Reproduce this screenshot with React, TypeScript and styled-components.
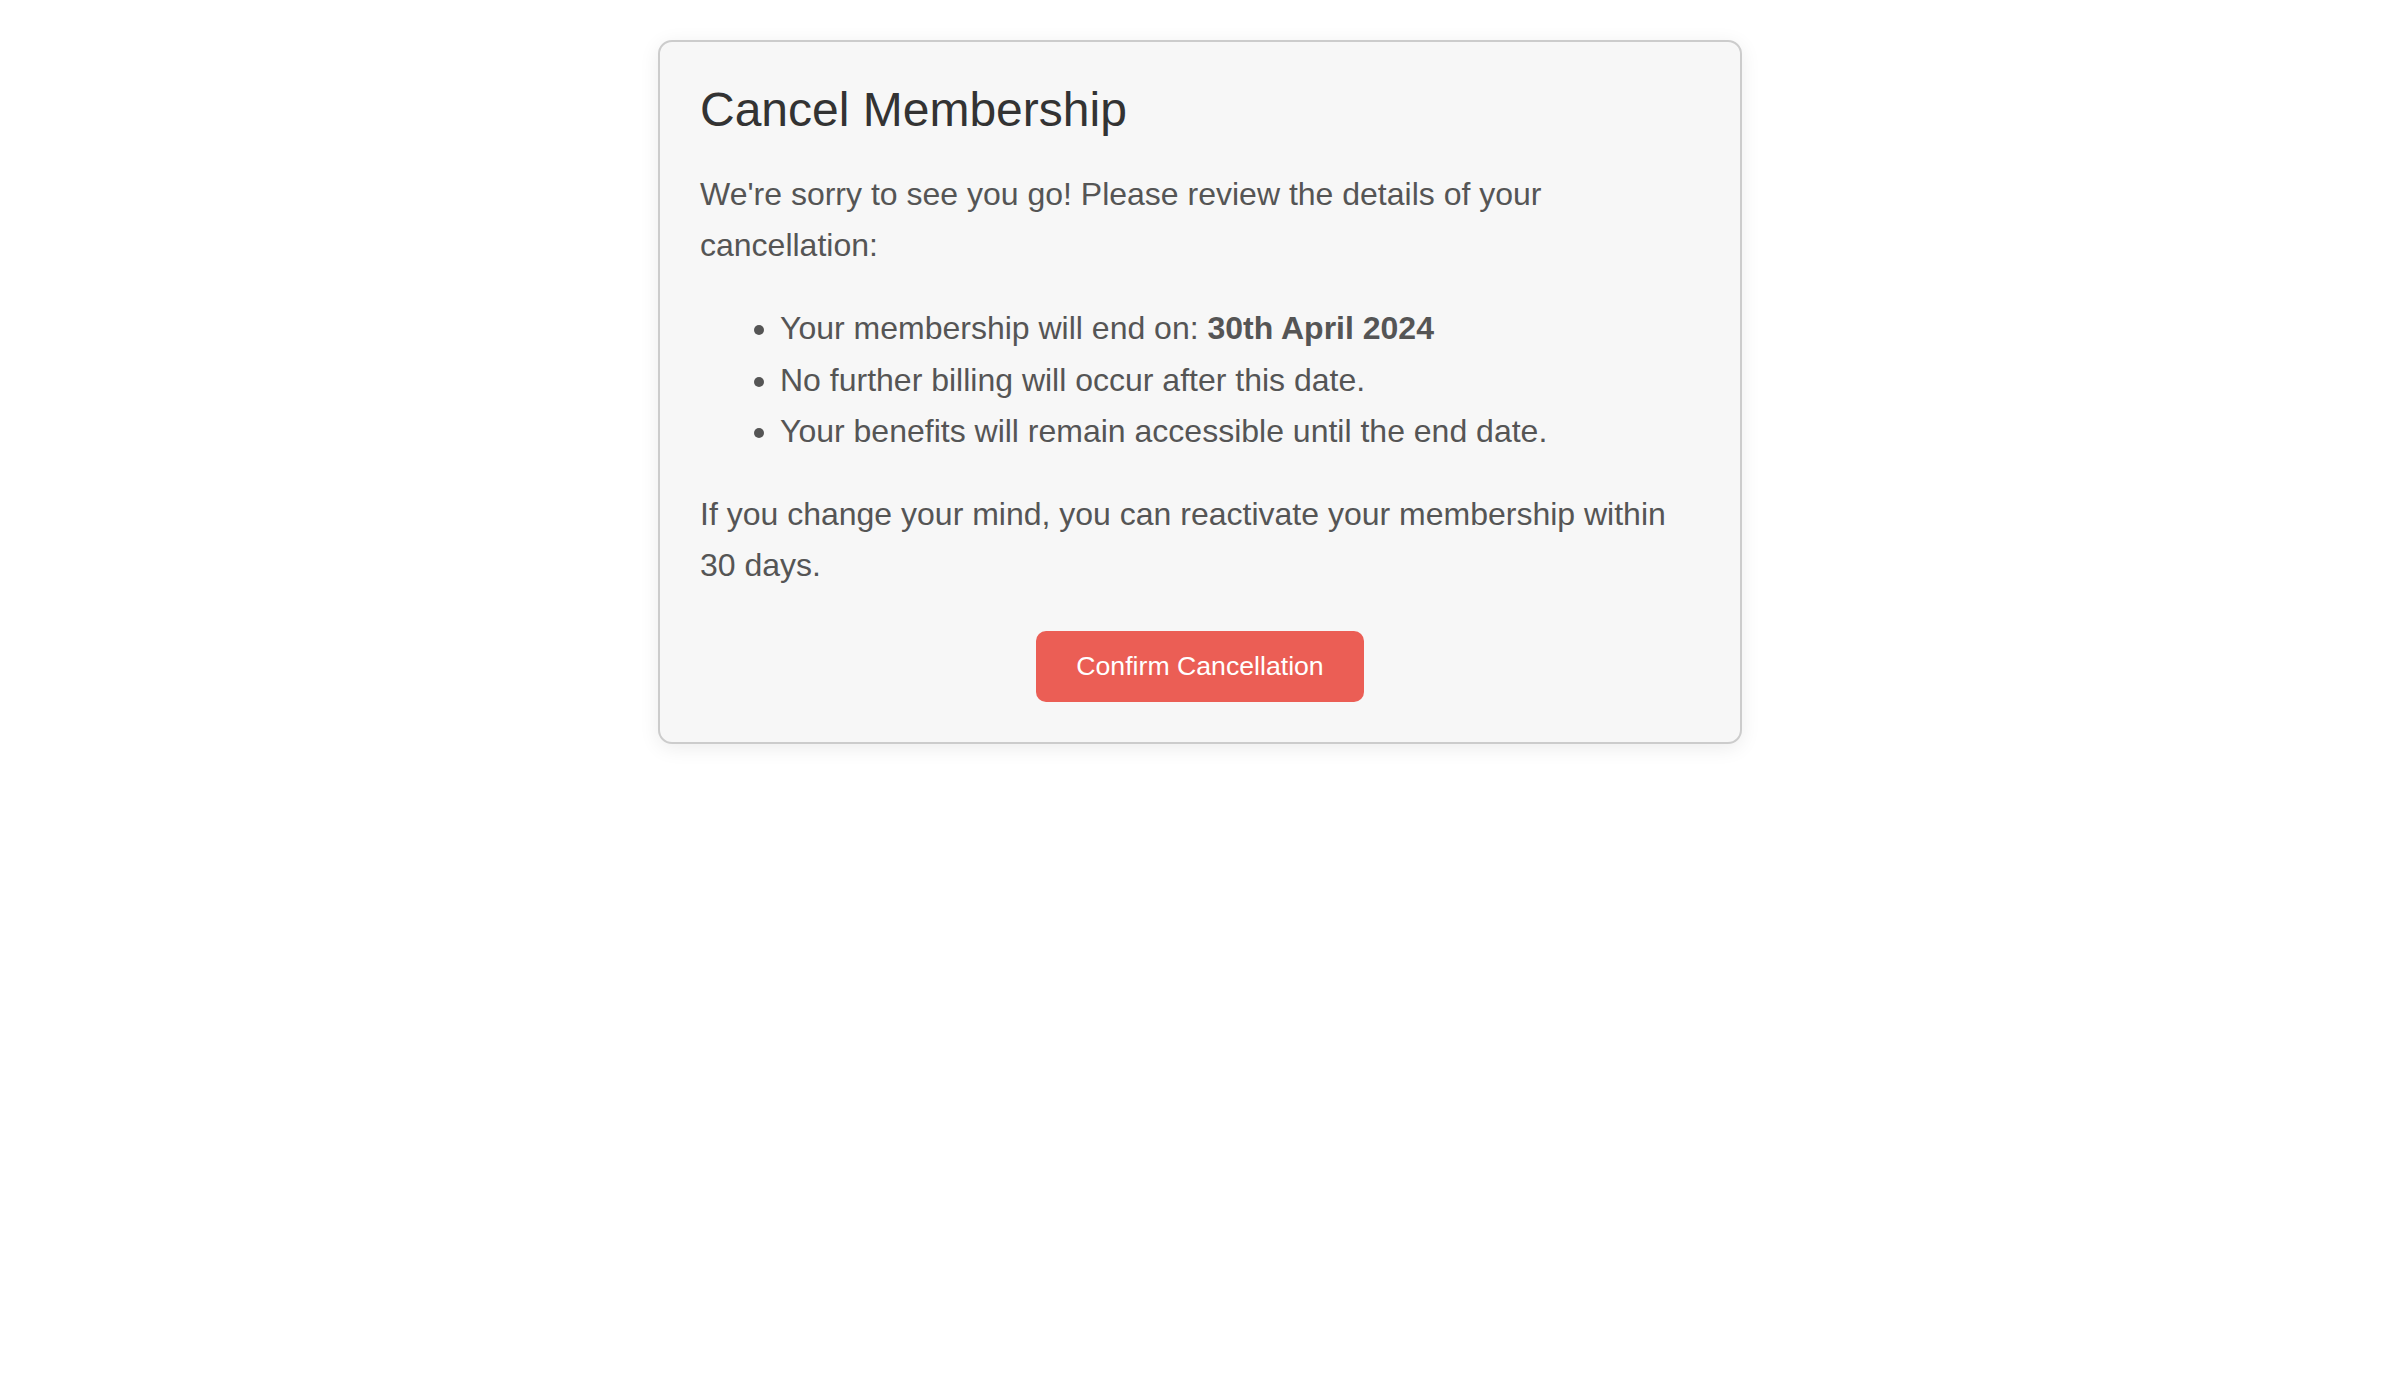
import React from 'react';
import styled, { createGlobalStyle } from 'styled-components';

const GlobalStyle = createGlobalStyle`
  html, body {
    margin: 0;
    padding: 0;
    background: #ffffff;
  }
  body {
    font-family: 'Liberation Sans', Arial, Helvetica, sans-serif;
  }
`;

const Page = styled.div`
  padding: 40px 0;
`;

const Card = styled.section`
  max-width: 1000px;
  margin: 0 auto;
  padding: 40px;
  background: #f7f7f7;
  border: 2px solid #cccccc;
  border-radius: 14px;
  box-shadow: 0 4px 20px rgba(0, 0, 0, 0.08);
  color: #555555;
  font-size: 32px;
  line-height: 1.6;
`;

const Title = styled.h2`
  margin: 0 0 32px;
  font-size: 48px;
  font-weight: normal;
  line-height: normal;
  color: #333333;
`;

const Paragraph = styled.p`
  margin: 32px 0;

  &:first-of-type {
    margin-top: 0;
  }
`;

const DetailList = styled.ul`
  margin: 32px 0;
  padding-left: 80px;
`;

const Actions = styled.div`
  display: flex;
  justify-content: center;
  margin-top: 40px;
`;

const DangerButton = styled.button`
  padding: 20px 40px;
  border: none;
  border-radius: 10px;
  background: #eb5e55;
  color: #ffffff;
  font-family: 'Liberation Sans', Arial, sans-serif;
  font-size: 26.67px;
  line-height: normal;
  cursor: pointer;
`;

export default function App() {
  return (
    <>
      <GlobalStyle />
      <Page>
        <Card>
          <Title>Cancel Membership</Title>
          <Paragraph>
            We're sorry to see you go! Please review the details of your cancellation:
          </Paragraph>
          <DetailList>
            <li>
              Your membership will end on: <strong>30th April 2024</strong>
            </li>
            <li>No further billing will occur after this date.</li>
            <li>Your benefits will remain accessible until the end date.</li>
          </DetailList>
          <Paragraph>
            If you change your mind, you can reactivate your membership within 30 days.
          </Paragraph>
          <Actions>
            <DangerButton type="button">Confirm Cancellation</DangerButton>
          </Actions>
        </Card>
      </Page>
    </>
  );
}
